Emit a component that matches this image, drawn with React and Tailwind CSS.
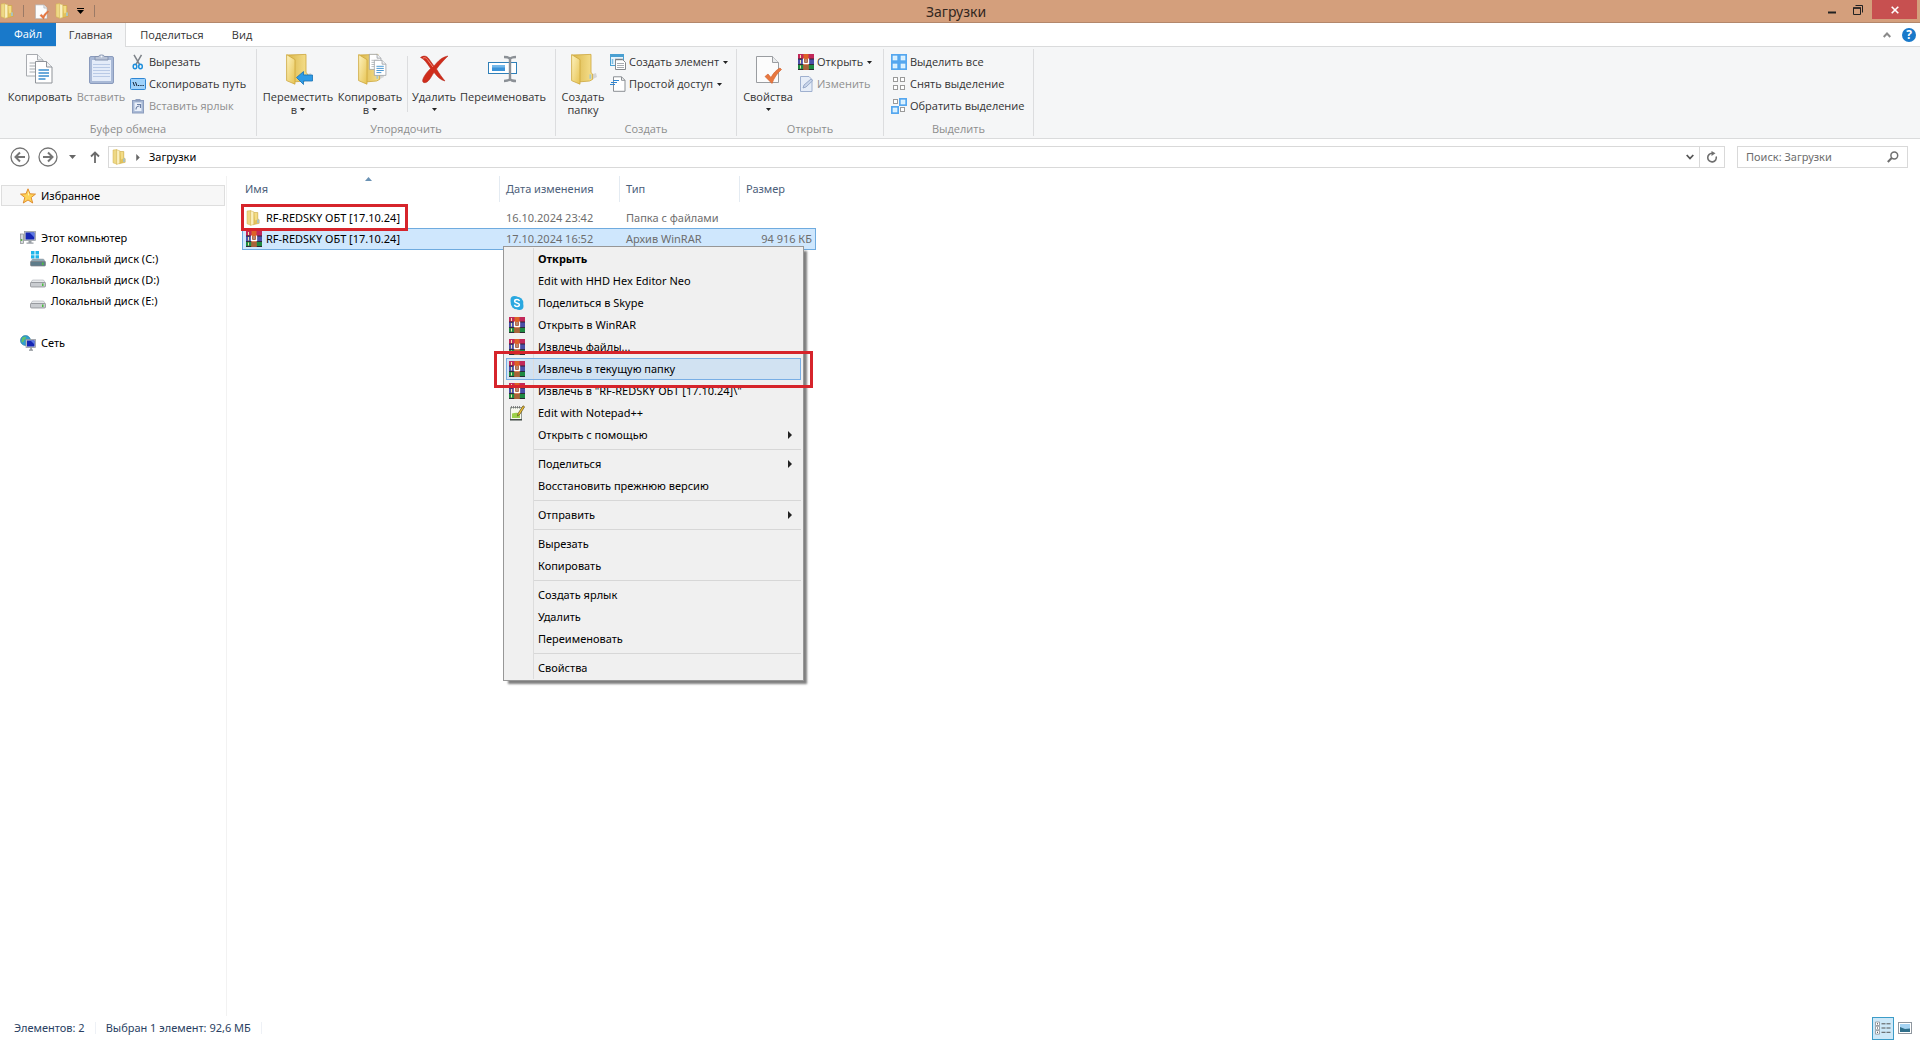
import React from "react";

/* ---------- icons ---------- */

function FolderIcon({ className = "h-4 w-4" }) {
  return (
    <svg viewBox="0 0 16 16" className={className} aria-hidden="true">
      <path d="M7 2.5h4.8v6.2l1.4 1v3.6L7 14.8z" fill="#e3c35a" stroke="#c9a640" strokeWidth=".5" />
      <rect x="11.2" y="9.4" width="1.6" height="3.6" fill="#9fc3d8" />
      <path d="M8.2 3h3v6.4L9 10.500z" fill="#f3dc86" />
      <path d="M1 1 5 .6V15.200L1 13.800z" fill="#eed885" stroke="#d2b24e" strokeWidth=".5" />
      <path d="M4.600.8 7.800 1.800v12.600l-3.200 1z" fill="#faf0bf" stroke="#d2b24e" strokeWidth=".5" />
    </svg>
  );
}

function BigFolder({ children }) {
  return (
    <svg viewBox="0 0 32 32" className="h-8 w-8 overflow-visible" aria-hidden="true">
      <defs>
        <linearGradient id="fold-a" x1="0" y1="0" x2="1" y2="1">
          <stop offset="0" stopColor="#fdf3c0" />
          <stop offset="1" stopColor="#e7c351" />
        </linearGradient>
        <linearGradient id="fold-b" x1="0" y1="0" x2="1" y2="0">
          <stop offset="0" stopColor="#d9b548" />
          <stop offset="1" stopColor="#f6e08e" />
        </linearGradient>
      </defs>
      <path d="M22 28l8-4-1-4-6 2z" fill="#000" opacity=".13" />
      <path d="M5 2l19-.6v18.200l1.600 1.400v5.400l-3 1.600L11 29z" fill="url(#fold-b)" stroke="#cda63a" strokeWidth=".8" />
      <rect x="22.400" y="21.400" width="1.800" height="4.400" fill="#a8c8d0" />
      <path d="M4.600 1.600 13 6.600v24.600l-8.400-3.600z" fill="url(#fold-a)" stroke="#cda63a" strokeWidth=".8" />
      {children}
    </svg>
  );
}

function PageShape({ x, y, blue }) {
  const line = blue ? "#3b8fd0" : "#b4b8bc";
  return (
    <g transform={`translate(${x} ${y})`}>
      <path d="M.5.5h11l5.500 5.500v16H.5z" fill="#fff" stroke="#8f9399" />
      <path d="M11.500.5V6H17" fill="#eef0f2" stroke="#8f9399" />
      <path d="M3.500 9H14M3.500 12H14M3.500 15H14M3.500 18h7" stroke={line} strokeWidth="1.300" />
    </g>
  );
}

function CopyIcon() {
  return (
    <svg viewBox="0 0 32 32" className="h-8 w-8 overflow-visible" aria-hidden="true">
      <g opacity=".75"><PageShape x={2} y={1} /></g>
      <PageShape x={11} y={8} blue />
    </svg>
  );
}

function PasteIcon() {
  return (
    <svg viewBox="0 0 32 32" className="h-8 w-8" aria-hidden="true">
      <rect x="4.500" y="3.500" width="24" height="27" rx="1.500" fill="#a9b9d6" stroke="#8a9bbd" />
      <rect x="7" y="7" width="19" height="21" fill="#e4ecf9" />
      <path d="M8 11.500h17M8 14.500h17M8 17.500h17M8 20.500h17M8 23.500h17" stroke="#b9cae6" />
      <path d="M10 3.500h3.500C14 1.500 19 1.500 19.500 3.500H23V7H10z" fill="#b9c3d6" stroke="#8493b0" />
      <circle cx="16.500" cy="3.500" r="1" fill="#f3f6fb" />
    </svg>
  );
}

function DeleteIcon() {
  return (
    <svg viewBox="0 0 32 32" className="h-8 w-8" aria-hidden="true">
      <path d="M2.500 4.500C6 2 9 3 11 6l5 7c4-5 8-9 14-10-4 4-8 8-11.500 13 3 5 6 9 8.500 12-5-1-8-5-11-8.500C13 24 10 31 5.500 29.500 3 28 6 22 12.500 15.500 9 10 6 6 2.500 4.500z" fill="#cf2d1c" stroke="#b3281a" strokeWidth=".5" />
      <path d="M5 5c3-1 4 1 5.500 3l4.500 6" stroke="#f08a78" strokeWidth="1" fill="none" />
    </svg>
  );
}

function RenameIcon() {
  return (
    <svg viewBox="0 0 32 32" className="h-8 w-8" aria-hidden="true">
      <rect x="1.500" y="9.500" width="28" height="11" fill="#fff" stroke="#2f7fb8" />
      <rect x="5" y="12" width="13" height="6" fill="#3a93d8" />
      <rect x="5" y="12" width="13" height="2.500" fill="#74b8ea" />
      <path d="M17 4c3 0 5 .5 6 2 1-1.500 3-2 6-2M23 6v20M17 28c3 0 5-.5 6-2 1 1.500 3 2 6 2" stroke="#8b9096" strokeWidth="2.400" fill="none" />
    </svg>
  );
}

function PropertiesIcon({ className = "h-8 w-8" }) {
  return (
    <svg viewBox="0 0 32 32" className={className} aria-hidden="true">
      <path d="M4.500 3.500h16l6 6v20h-22z" fill="#fcfcfc" stroke="#9a9da1" />
      <path d="M20.500 3.500v6h6" fill="#e9ebed" stroke="#9a9da1" />
      <path d="M13 23.500l3-2.500 3 3.500c2-4 5-7.500 9-9.500l1.500 1.500c-4.500 4-7.500 8.500-9.500 14z" fill="#e87840" stroke="#cf5d28" strokeWidth=".6" />
    </svg>
  );
}

function RarIcon() {
  return (
    <svg viewBox="0 0 16 16" className="h-4 w-4" aria-hidden="true">
      <rect y="0" width="16" height="5" fill="#c2285a" />
      <rect y="5" width="16" height="5.500" fill="#4a4fa8" />
      <rect y="10.500" width="16" height="5.500" fill="#1f8a42" />
      <path d="M0 5h16M0 10.500h16M0 15.500h16" stroke="#2a1f30" strokeWidth=".9" />
      <path d="M2.500 1v3M2.500 6v3.500M2.500 11.500v3" stroke="#f0e6a8" strokeWidth="1" />
      <rect x="5.500" width="5" height="16" fill="#dd6226" />
      <rect x="5.500" y="11" width="5" height="5" fill="#a8623a" />
      <rect x="6.500" y="5" width="3" height="4.500" fill="#7d3d22" />
      <path d="M5.500 4.500v5h5v-5" stroke="#fff" strokeWidth="1.300" fill="none" />
      <path d="M8 5v3" stroke="#f3d9c6" strokeWidth="1" />
    </svg>
  );
}

function ScissorsIcon() {
  return (
    <svg viewBox="0 0 16 16" className="h-4 w-4" aria-hidden="true">
      <path d="M4 .8l5.500 9.500M11.500.8L6 10.300" stroke="#7d8288" strokeWidth="1.500" />
      <ellipse cx="5" cy="12.500" rx="1.800" ry="2.300" fill="none" stroke="#1f8fdb" strokeWidth="1.500" />
      <ellipse cx="10.500" cy="12.500" rx="1.800" ry="2.300" fill="none" stroke="#1f8fdb" strokeWidth="1.500" />
    </svg>
  );
}

function PathIcon() {
  return (
    <svg viewBox="0 0 16 16" className="h-4 w-4" aria-hidden="true">
      <rect x=".5" y="2.500" width="15" height="11" rx="1" fill="#9fd2fb" stroke="#2f86d3" />
      <path d="M3 6l1.500 4M5.500 6L7 10" stroke="#15263b" />
      <path d="M8 9.500h1.300M10.300 9.500h1.300M12.500 9.500h1.300" stroke="#15263b" />
    </svg>
  );
}

function ShortcutIcon() {
  return (
    <svg viewBox="0 0 16 16" className="h-4 w-4" aria-hidden="true">
      <rect x="2.500" y="2.500" width="11" height="12.500" fill="#a9bad6" stroke="#8c9dbe" />
      <rect x="4.500" y="4.500" width="7" height="8.500" fill="#eaf0fa" />
      <rect x="5.500" y="1" width="5" height="2.500" fill="#8c9dbe" />
      <path d="M6 11.500c0-2 1-3.300 3.300-3.500M7 6.500h3.500V10" stroke="#6c80a6" strokeWidth="1.200" fill="none" />
    </svg>
  );
}

function NewItemIcon() {
  return (
    <svg viewBox="0 0 16 16" className="h-4 w-4" aria-hidden="true">
      <rect x=".5" y=".5" width="13" height="11" fill="#e8f4fc" stroke="#4aa0d2" />
      <path d="M1 2h12" stroke="#4aa0d2" strokeWidth="2" />
      <path d="M2.500 5v5" stroke="#7fbfe4" strokeWidth="1.500" />
      <path d="M5.500 5.500h7l3 3v7h-10z" fill="#fff" stroke="#84888d" />
      <path d="M6 4.500v2M8 4.500v2M10 4.500v2M12 4.500v2" stroke="#6a6e73" strokeWidth=".8" />
      <path d="M7 9.500h7M7 11.500h7M7 13.500h7" stroke="#a9adb2" />
    </svg>
  );
}

function EasyAccessIcon() {
  return (
    <svg viewBox="0 0 16 16" className="h-4 w-4" aria-hidden="true">
      <path d="M3.500.8h8l3.500 3.500v11H3.500z" fill="#fff" stroke="#8b8f94" />
      <path d="M11.500.8v3.500H15" fill="none" stroke="#8b8f94" />
      <path d="M3 4.500h6M1 6.500h6M0 8.500h5" stroke="#2f86d3" strokeWidth="1.200" />
    </svg>
  );
}

function EditIcon() {
  return (
    <svg viewBox="0 0 16 16" className="h-4 w-4" aria-hidden="true">
      <path d="M2.500.5h8.500l3 3v12H2.500z" fill="#e6edf8" stroke="#9fb0cf" />
      <path d="M5 12l1-3 7-6 1.500 1.800L8 11z" fill="#c8d5ea" stroke="#8a9dc2" strokeWidth=".8" />
    </svg>
  );
}

function SelectIcon({ on }) {
  const cells = [[0, 0], [8, 0], [0, 8], [8, 8]];
  return (
    <svg viewBox="0 0 16 16" className="h-4 w-4" aria-hidden="true">
      {cells.map(([x, y], i) =>
        on[i] ? (
          <g key={i}>
            <rect x={x} y={y} width="8" height="8" fill="#55a7ef" />
            <rect x={x + 2} y={y + 2} width="4" height="4" fill="#d6f0ff" stroke="#e9f7ff" strokeWidth=".6" />
          </g>
        ) : (
          <rect key={i} x={x ? 9.5 : 2.5} y={y ? 9.5 : 1.5} width="4" height="4" fill="#fff" stroke="#9a9a9a" />
        )
      )}
    </svg>
  );
}

function StarIcon() {
  return (
    <svg viewBox="0 0 16 16" className="h-4 w-4" aria-hidden="true">
      <path d="M8 .8l2 5 5.500.3-4.300 3.400 1.500 5.500L8 12l-4.700 3 1.500-5.500L.5 6.100 6 5.800z" fill="#fdd358" stroke="#dd8424" strokeWidth=".9" />
      <path d="M8 3l1.200 3.500L8 8z" fill="#fff2b8" />
    </svg>
  );
}

function ComputerIcon() {
  return (
    <svg viewBox="0 0 16 16" className="h-4 w-4" aria-hidden="true">
      <rect x=".5" y="4" width="3" height="9.500" fill="#d5d9dd" stroke="#85898e" strokeWidth=".7" />
      <rect x=".8" y="9" width="1.500" height="2" fill="#5bb543" />
      <rect x="4.500" y="1.500" width="11" height="9" fill="#c3c9cf" stroke="#8f959b" strokeWidth=".7" />
      <rect x="5.600" y="2.500" width="8.800" height="7" fill="#1526b4" />
      <path d="M9.500 2.500h4.900v5z" fill="#5b78e4" />
      <path d="M8.500 10.500h3v2h2v1.200H6.500v-1.200h2z" fill="#9aa0a6" />
    </svg>
  );
}

function DriveIcon({ system }) {
  return (
    <svg viewBox="0 0 16 16" className="h-4 w-4" aria-hidden="true">
      {system && <path d="M1 0h3.500v3.500H1zM5.500 0H9v3.500H5.500zM1 4.300h3.500v3.200H1zM5.500 4.300H9v3.200H5.500z" fill="#1fb6ea" />}
      <path d="M2.500 8h11l2 3H.5z" fill={system ? "#8fa9b5" : "#e6e8ea"} stroke="#9b9fa4" strokeWidth=".5" />
      <rect x=".5" y="10.500" width="15" height="4.500" rx="1" fill={system ? "#5e7c8a" : "#c9ccd0"} stroke="#7f8388" strokeWidth=".7" />
      <rect x="12" y="11.500" width="1.500" height="2.500" fill="#4cc040" />
    </svg>
  );
}

function NetworkIcon() {
  return (
    <svg viewBox="0 0 16 16" className="h-4 w-4" aria-hidden="true">
      <circle cx="5.500" cy="5.500" r="5" fill="#2f9fd0" stroke="#20729c" strokeWidth=".6" />
      <path d="M2 3c2-2 4-1.500 4 0s-2 1-2 2.500S2 8 1.500 7z" fill="#62c06a" />
      <rect x="6" y="4.500" width="9.500" height="8" fill="#c9ced4" stroke="#8c9197" strokeWidth=".7" />
      <rect x="7" y="5.500" width="7.500" height="6" fill="#1526b4" />
      <path d="M10.500 5.500h4v4z" fill="#5b78e4" />
      <path d="M9 14.500h4v1.200H9zM10.300 12.500h1.500v2h-1.500z" fill="#8c9197" />
    </svg>
  );
}

function SkypeIcon() {
  return (
    <svg viewBox="0 0 16 16" className="h-4 w-4" aria-hidden="true">
      <circle cx="5.500" cy="5" r="4" fill="#2aa8e0" />
      <circle cx="10.500" cy="11" r="4" fill="#2aa8e0" />
      <circle cx="8" cy="8" r="6.300" fill="#2aa8e0" />
      <path d="M10.500 6C10 4.800 9 4.600 8 4.600c-1.300 0-2.400.6-2.400 1.700C5.600 8.700 10.400 7.300 10.400 9.800c0 1.100-1.100 1.700-2.400 1.700-1.200 0-2.200-.5-2.600-1.700" fill="none" stroke="#fff" strokeWidth="1.500" />
    </svg>
  );
}

function NotepadIcon() {
  return (
    <svg viewBox="0 0 16 16" className="h-4 w-4" aria-hidden="true">
      <path d="M1.500 2.500h11v12h-11z" fill="#f6f8ee" stroke="#7c8680" strokeWidth=".8" />
      <path d="M1 14.800h12" stroke="#3c4640" strokeWidth="1.400" />
      <path d="M3 8.500c3-1 6-1 8 0V13H3z" fill="#9bd04a" />
      <path d="M2.500 1v2.500M4.500 1v2.500M6.500 1v2.500M8.500 1v2.500M10.500 1v2.500" stroke="#6c6c6c" strokeWidth=".8" />
      <path d="M8.500 11l.6-2.600L14 .8l1.600 1-4.700 7.500z" fill="#f1c232" stroke="#5a4a20" strokeWidth=".7" />
    </svg>
  );
}

/* ---------- small pieces ---------- */

function Caret({ className = "" }) {
  return (
    <svg viewBox="0 0 5 3" className={"inline-block h-[3px] w-[5px] " + className} aria-hidden="true">
      <path d="M0 0h5L2.500 3z" fill="#222" />
    </svg>
  );
}

function BigButton({ icon, label, second, caret, disabled, width }) {
  return (
    <button type="button" disabled={disabled} className={"flex flex-col items-center " + width + (disabled ? " text-[#8f8f8f]" : "")}>
      {icon}
      <span className="mt-[5px] whitespace-nowrap leading-[13px]">{label}</span>
      <span className="flex h-[13px] items-center gap-[3px] leading-[13px]">
        {second}
        {caret && <Caret />}
      </span>
    </button>
  );
}

function SmallButton({ icon, label, caret, disabled }) {
  return (
    <button type="button" disabled={disabled} className={"flex h-[22px] items-center gap-[3px] whitespace-nowrap " + (disabled ? "text-[#8f8f8f]" : "")}>
      {icon}
      <span>{label}</span>
      {caret && <Caret className="ml-px" />}
    </button>
  );
}

function Group({ title, width, children }) {
  return (
    <section aria-label={title} className={"flex h-[87px] flex-col border-r border-[#dcdddf] " + width}>
      <div className="flex flex-1">{children}</div>
      <div className="text-center leading-[14px] text-[#8d8d8d]">{title}</div>
    </section>
  );
}

/* ---------- regions ---------- */

function TitleBar() {
  return (
    <header className="flex h-[23px] items-stretch border-b border-[#b3876b] bg-[#d49f7c]">
      <div className="flex flex-1 items-center">
        <FolderIcon />
        <span className="ml-[7px] h-3 w-px bg-[#9b7a66]" />
        <button type="button" aria-label="Свойства" className="ml-[9px]"><PropertiesIcon className="h-[17px] w-[17px]" /></button>
        <button type="button" aria-label="Новая папка" className="ml-[5px]"><FolderIcon /></button>
        <button type="button" aria-label="Настройка панели" className="ml-[6px] flex flex-col items-center gap-px">
          <span className="h-px w-[7px] bg-black" />
          <svg viewBox="0 0 7 4" className="h-1 w-[7px]"><path d="M0 0h7L3.500 4z" /></svg>
        </button>
        <span className="ml-[10px] h-3 w-px bg-[#9b7a66]" />
      </div>
      <h1 className="pr-2 text-[14px] leading-[23px] text-[#33271f]">Загрузки</h1>
      <div className="flex flex-1 items-start justify-end">
        <button type="button" aria-label="Свернуть" className="flex h-[19px] w-[26px] items-center justify-center">
          <svg viewBox="0 0 10 10" className="h-[10px] w-[10px]"><path d="M1 7.500h8" stroke="#222" strokeWidth="2" /></svg>
        </button>
        <button type="button" aria-label="Свернуть в окно" className="flex h-[19px] w-[26px] items-center justify-center">
          <svg viewBox="0 0 10 10" className="h-[10px] w-[10px]" fill="none" stroke="#222"><path d="M.5 3v6.500h7V3z" /><path d="M0 3h8" strokeWidth="1.500" /><path d="M2.500.5h7v7" /></svg>
        </button>
        <button type="button" aria-label="Закрыть" className="mr-[3px] ml-px flex h-[19px] w-[45px] items-center justify-center bg-[#c75050]">
          <svg viewBox="0 0 8 8" className="h-2 w-2"><path d="M.7.7l6.600 6.600M7.300.7L.7 7.300" stroke="#fff" strokeWidth="1.600" /></svg>
        </button>
      </div>
    </header>
  );
}

function Tabs() {
  return (
    <nav className="flex h-6 items-stretch border-b border-[#dadbdc] bg-white text-[#333]">
      <button type="button" className="w-14 bg-[#1979ca] pb-[2px] text-white">Файл</button>
      <button type="button" className="-mb-px w-[70px] border-r border-[#dadbdc] bg-[#f5f6f7]">Главная</button>
      <button type="button" className="w-[92px]">Поделиться</button>
      <button type="button" className="w-12">Вид</button>
      <div className="flex flex-1 items-center justify-end gap-[11px] pr-1">
        <button type="button" aria-label="Свернуть ленту">
          <svg viewBox="0 0 8 6" className="h-[6px] w-2"><path d="M.7 5L4 1.500 7.300 5" stroke="#8b8b8b" strokeWidth="2" fill="none" /></svg>
        </button>
        <button type="button" aria-label="Справка" className="flex h-[14px] w-[14px] items-center justify-center rounded-full bg-[#1979ca] text-[12px] leading-[14px] font-bold text-white">?</button>
      </div>
    </nav>
  );
}

function Ribbon() {
  return (
    <div className="flex items-start border-b border-[#dadbdc] bg-[#f5f6f7] pt-[2px] pb-[2px] text-[#333]">
      <Group title="Буфер обмена" width="w-[257px]">
        <div className="flex pt-1 pl-1">
          <BigButton icon={<CopyIcon />} label="Копировать" width="w-[72px]" />
          <BigButton icon={<PasteIcon />} label="Вставить" disabled width="w-[50px]" />
        </div>
        <div className="flex flex-col pt-[2px] pl-1">
          <SmallButton icon={<ScissorsIcon />} label="Вырезать" />
          <SmallButton icon={<PathIcon />} label="Скопировать путь" />
          <SmallButton icon={<ShortcutIcon />} label="Вставить ярлык" disabled />
        </div>
      </Group>
      <Group title="Упорядочить" width="w-[299px]">
        <div className="flex pt-1 pl-1">
          <BigButton
            icon={<BigFolder><path d="M14.500 24.500l7-6v3.500h9v6h-9v3.500z" fill="#2f9be6" stroke="#1672b5" strokeWidth=".8" /></BigFolder>}
            label="Переместить" second="в" caret width="w-[74px]" />
          <BigButton
            icon={
              <BigFolder>
                <g transform="translate(15 1) scale(.7)"><PageShape x={0} y={0} /></g>
                <g transform="translate(20 7) scale(.7)"><PageShape x={0} y={0} blue /></g>
              </BigFolder>
            }
            label="Копировать" second="в" caret width="w-[70px]" />
        </div>
        <div className="mt-[7px] ml-[2px] h-14 w-px bg-[#dcdddf]" />
        <div className="flex pt-1 pl-[3px]">
          <BigButton icon={<DeleteIcon />} label="Удалить" caret width="w-[46px]" />
          <BigButton icon={<RenameIcon />} label="Переименовать" width="w-[92px]" />
        </div>
      </Group>
      <Group title="Создать" width="w-[181px]">
        <div className="flex pt-1 pl-1">
          <BigButton icon={<BigFolder />} label="Создать" second="папку" width="w-[46px]" />
        </div>
        <div className="flex flex-col pt-[2px] pl-1">
          <SmallButton icon={<NewItemIcon />} label="Создать элемент" caret />
          <SmallButton icon={<EasyAccessIcon />} label="Простой доступ" caret />
        </div>
      </Group>
      <Group title="Открыть" width="w-[147px]">
        <div className="flex pt-1 pl-1">
          <BigButton icon={<PropertiesIcon />} label="Свойства" caret width="w-[54px]" />
        </div>
        <div className="flex flex-col pt-[2px] pl-[3px]">
          <SmallButton icon={<RarIcon />} label="Открыть" caret />
          <SmallButton icon={<EditIcon />} label="Изменить" disabled />
        </div>
      </Group>
      <Group title="Выделить" width="w-[150px]">
        <div className="flex flex-col pt-[2px] pl-[7px]">
          <SmallButton icon={<SelectIcon on={[1, 1, 1, 1]} />} label="Выделить все" />
          <SmallButton icon={<SelectIcon on={[0, 0, 0, 0]} />} label="Снять выделение" />
          <SmallButton icon={<SelectIcon on={[0, 1, 1, 0]} />} label="Обратить выделение" />
        </div>
      </Group>
    </div>
  );
}

function NavCircle({ label, flip }) {
  return (
    <button type="button" aria-label={label}>
      <svg viewBox="0 0 20 20" className={"h-5 w-5 " + (flip ? "rotate-180" : "")} fill="none" stroke="#757575">
        <circle cx="10" cy="10" r="9" strokeWidth="1.300" />
        <path d="M15 10H6M10 5.500L5.500 10l4.500 4.500" strokeWidth="2" />
      </svg>
    </button>
  );
}

function AddressBar() {
  return (
    <div className="flex h-9 items-center bg-white pr-3 pl-[10px]">
      <div className="flex items-center gap-2">
        <NavCircle label="Назад" />
        <NavCircle label="Вперёд" flip />
      </div>
      <button type="button" aria-label="Последние расположения" className="ml-[11px]">
        <svg viewBox="0 0 7 4" className="h-1 w-[7px]"><path d="M0 0h7L3.500 4z" fill="#666" /></svg>
      </button>
      <button type="button" aria-label="Вверх" className="ml-[14px]">
        <svg viewBox="0 0 10 12" className="h-3 w-[10px]" fill="none" stroke="#6b6b6b" strokeWidth="1.800"><path d="M5 12V2M1 5.500l4-4 4 4" /></svg>
      </button>
      <div className="ml-2 flex h-[22px] flex-1 items-center border border-[#d9d9d9] pl-[3px]">
        <FolderIcon />
        <svg viewBox="0 0 4 8" className="ml-2 h-[7px] w-1"><path d="M0 0l4 4-4 4z" fill="#666" /></svg>
        <a href="#downloads" className="ml-[9px] text-black">Загрузки</a>
        <button type="button" aria-label="Список адресов" className="ml-auto flex h-full w-[18px] items-center justify-center">
          <svg viewBox="0 0 8 6" className="h-[6px] w-2"><path d="M.7 1L4 4.500 7.300 1" stroke="#555" strokeWidth="1.800" fill="none" /></svg>
        </button>
        <button type="button" aria-label="Обновить" className="flex h-full w-[25px] items-center justify-center border-l border-[#d9d9d9]">
          <svg viewBox="0 0 12 12" className="h-3 w-3" fill="none"><path d="M10.200 5.500A4.300 4.300 0 1 1 6.200 2.300" stroke="#6f6f6f" strokeWidth="1.600" /><path d="M5.500 0l4 2.300-4 2.800z" fill="#6f6f6f" /></svg>
        </button>
      </div>
      <label className="ml-3 flex h-[22px] w-[171px] items-center border border-[#d9d9d9] pr-2 pl-2">
        <input aria-label="Поиск: Загрузки" placeholder="Поиск: Загрузки" className="w-full min-w-0 flex-1 bg-transparent outline-none placeholder:text-[#6d6d6d]" />
        <svg viewBox="0 0 12 12" className="h-3 w-3 shrink-0" fill="none" stroke="#6f6f6f"><circle cx="7.300" cy="4.500" r="3.400" strokeWidth="1.500" /><path d="M4.700 7L.8 11" strokeWidth="2" /></svg>
      </label>
    </div>
  );
}

function NavItem({ icon, label, nested, active }) {
  return (
    <li>
      <a
        href="#nav"
        className={
          "flex h-[21px] items-center gap-[5px] border " +
          (nested ? "pl-7 " : "pl-[18px] ") +
          (active ? "border-[#dedede] bg-[#f7f7f7]" : "border-transparent")
        }
      >
        {icon}
        <span>{label}</span>
      </a>
    </li>
  );
}

function Sidebar() {
  return (
    <aside className="w-[227px] shrink-0 border-r border-[#f2f2f2] text-black">
      <ul className="flex flex-col pt-[9px] pr-px pl-px">
        <NavItem icon={<StarIcon />} label="Избранное" active />
        <li className="h-[21px]" />
        <NavItem icon={<ComputerIcon />} label="Этот компьютер" />
        <NavItem icon={<DriveIcon system />} label="Локальный диск (C:)" nested />
        <NavItem icon={<DriveIcon />} label="Локальный диск (D:)" nested />
        <NavItem icon={<DriveIcon />} label="Локальный диск (E:)" nested />
        <li className="h-[21px]" />
        <NavItem icon={<NetworkIcon />} label="Сеть" />
      </ul>
    </aside>
  );
}

function FileTable() {
  return (
    <table className="ml-[15px] w-[574px] table-fixed border-separate border-spacing-0">
      <colgroup>
        <col className="w-[258px]" />
        <col className="w-[120px]" />
        <col className="w-[120px]" />
        <col className="w-[76px]" />
      </colgroup>
      <thead>
        <tr className="h-[26px] text-left text-[#4c607a]">
          <th className="relative border-r border-[#e4ebf2] pl-[3px] font-normal">
            Имя
            <svg viewBox="0 0 7 4" className="absolute top-px left-[123px] h-1 w-[7px]"><path d="M0 4h7L3.500 0z" fill="#6a92b4" /></svg>
          </th>
          <th className="border-r border-[#e4ebf2] pl-[6px] font-normal">Дата изменения</th>
          <th className="border-r border-[#e4ebf2] pl-[6px] font-normal">Тип</th>
          <th className="pl-[6px] font-normal">Размер</th>
        </tr>
      </thead>
      <tbody className="text-[#6d6d6d]">
        <tr><td className="h-[5px]" colSpan={4} /></tr>
        <tr className="h-[21px]">
          <td className="pl-1 text-black"><span className="flex items-center gap-1"><FolderIcon />RF-REDSKY ОБТ [17.10.24]</span></td>
          <td className="pl-[6px]">16.10.2024 23:42</td>
          <td className="pl-[6px]">Папка с файлами</td>
          <td />
        </tr>
        <tr className="h-[22px] bg-[#cfe7fd]">
          <td className="border-y border-l border-[#6fabdf] pl-[3px] text-black"><span className="flex items-center gap-1"><RarIcon />RF-REDSKY ОБТ [17.10.24]</span></td>
          <td className="border-y border-[#6fabdf] pl-[6px]">17.10.2024 16:52</td>
          <td className="border-y border-[#6fabdf] pl-[6px]">Архив WinRAR</td>
          <td className="border-y border-r border-[#6fabdf] pr-[3px] text-right">94 916 КБ</td>
        </tr>
      </tbody>
    </table>
  );
}

const menu = [
  { label: "Открыть", bold: true },
  { label: "Edit with HHD Hex Editor Neo" },
  { label: "Поделиться в Skype", icon: <SkypeIcon /> },
  { label: "Открыть в WinRAR", icon: <RarIcon /> },
  { label: "Извлечь файлы...", icon: <RarIcon /> },
  { label: "Извлечь в текущую папку", icon: <RarIcon />, active: true },
  { label: 'Извлечь в "RF-REDSKY ОБТ [17.10.24]\\"', icon: <RarIcon /> },
  { label: "Edit with Notepad++", icon: <NotepadIcon /> },
  { label: "Открыть с помощью", sub: true },
  null,
  { label: "Поделиться", sub: true },
  { label: "Восстановить прежнюю версию" },
  null,
  { label: "Отправить", sub: true },
  null,
  { label: "Вырезать" },
  { label: "Копировать" },
  null,
  { label: "Создать ярлык" },
  { label: "Удалить" },
  { label: "Переименовать" },
  null,
  { label: "Свойства" },
];

function ContextMenu() {
  return (
    <div role="menu" className="absolute top-[70px] left-[276px] w-[301px] border border-[#979797] bg-[#f0f0f0] px-[2px] py-px text-black shadow-[4px_4px_2px_-1px_rgba(0,0,0,0.5)]">
      {menu.map((m, i) =>
        m === null ? (
          <div key={i} role="separator" className="flex h-[7px]">
            <span className="w-[28px] border-r border-[#dcdcdc]" />
            <span className="mt-[3px] h-px flex-1 bg-[#d7d7d7]" />
          </div>
        ) : (
          <button
            key={i}
            type="button"
            role="menuitem"
            className={
              "relative flex h-[22px] w-full items-stretch text-left " +
              (m.active ? "bg-[#d1e2f2] outline outline-1 -outline-offset-1 outline-[#78aee5] " : "") +
              (m.bold ? "font-bold" : "")
            }
          >
            <span className="flex w-[28px] shrink-0 items-center border-r border-[#dcdcdc] pl-[3px]">{m.icon}</span>
            <span className="flex flex-1 items-center whitespace-nowrap pl-1">{m.label}</span>
            {m.sub && (
              <span className="flex items-center pr-[9px]">
                <svg viewBox="0 0 4 8" className="h-2 w-1"><path d="M0 0l4 4-4 4z" fill="#222" /></svg>
              </span>
            )}
          </button>
        )
      )}
      <div className="pointer-events-none absolute top-[104px] -left-[10px] h-[37px] w-[319px] border-[3px] border-[#d6242b]" />
    </div>
  );
}

function StatusBar() {
  return (
    <footer className="flex h-6 items-center bg-white pl-[14px] text-[#2a3f63]">
      <span>Элементов: 2</span>
      <span className="ml-[10px] h-3 w-px bg-[#eef1f6]" />
      <span className="ml-[10px]">Выбран 1 элемент: 92,6 МБ</span>
      <span className="ml-[10px] h-3 w-px bg-[#eef1f6]" />
      <div className="ml-auto flex items-center gap-[4px] pr-2">
        <button type="button" aria-label="Таблица" className="flex h-[23px] w-[22px] items-center justify-center border border-[#3c9cc8] bg-[#cde8f8]">
          <svg viewBox="0 0 16 14" className="h-[14px] w-4" fill="none">
            <path d="M.5 1h4v3.500h-4zM.5 5.300h4v3.500h-4zM.5 9.600h4v3.500h-4z" fill="#fff" stroke="#8a8f95" strokeWidth=".8" />
            <path d="M2 2.800h1M2 7h1M2 11.300h1" stroke="#333" />
            <path d="M6.500 2.800h4M11.500 2.800h4M6.500 7h4M11.500 7h4M6.500 11.300h4M11.500 11.300h4" stroke="#555" />
          </svg>
        </button>
        <button type="button" aria-label="Крупные значки">
          <svg viewBox="0 0 14 12" className="h-3 w-[14px]">
            <rect x=".5" y=".5" width="13" height="11" fill="#fff" stroke="#8f979f" />
            <rect x="2" y="2" width="10" height="8" fill="#a5d3f2" />
            <path d="M2 5l5 2 5-.5V10H2z" fill="#2f6f8a" />
          </svg>
        </button>
      </div>
    </footer>
  );
}

export default function App() {
  return (
    <div className="flex min-h-screen flex-col bg-white font-['Noto_Sans','Open_Sans',sans-serif] text-[11px] leading-4">
      <TitleBar />
      <div className="font-['Open_Sans','Noto_Sans',sans-serif]">
        <Tabs />
        <Ribbon />
      </div>
      <AddressBar />
      <main className="flex flex-1 pt-px">
        <Sidebar />
        <section className="relative flex-1">
          <FileTable />
          <div className="pointer-events-none absolute top-[28px] left-[14px] h-[27px] w-[167px] border-[3px] border-[#d6242b]" />
          <ContextMenu />
        </section>
      </main>
      <StatusBar />
    </div>
  );
}
